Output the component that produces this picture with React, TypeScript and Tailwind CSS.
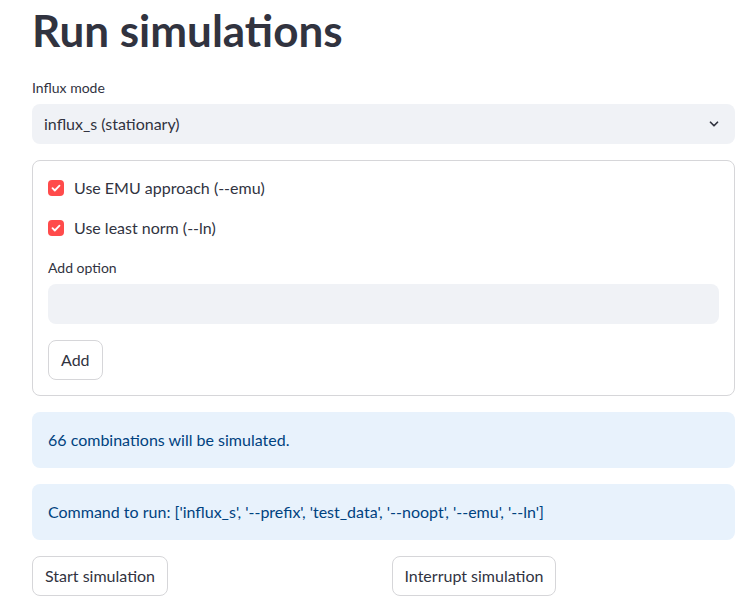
const font = { fontFamily: '"Source Sans Pro", Lato, "Noto Sans", sans-serif' };

const Checkbox = ({ label }: { label: string }) => (
  <label className="flex items-center h-6 gap-2.5">
    <span className="w-4 h-4 rounded-[4px] bg-[#ff4b4b] flex items-center justify-center">
      <svg width="12" height="12" viewBox="0 0 12 12" fill="none">
        <path d="M2.5 6.2l2.3 2.3 4.7-4.8" stroke="white" strokeWidth="1.8" strokeLinecap="round" strokeLinejoin="round" />
      </svg>
    </span>
    <span className="text-[16px] text-[#31333f]">{label}</span>
  </label>
);

const Button = ({ children }: { children: string }) => (
  <button className="h-10 px-3 rounded-lg border border-[#d6d6d9] bg-white text-[16px] text-[#31333f]">
    {children}
  </button>
);

export default function App() {
  return (
    <div className="min-h-screen bg-white pl-8 pr-[11px] pt-1 text-[#31333f]" style={font}>
      <h1 className="text-[44px] font-bold leading-[52px] text-[#31333f]">Run simulations</h1>

      <div className="mt-[20px]">
        <div className="text-[14px] h-6 leading-6">Influx mode</div>
        <div className="mt-1 h-10 rounded-lg bg-[#f0f2f6] flex items-center justify-between pl-3 pr-3.5">
          <span className="text-[16px]">influx_s (stationary)</span>
          <svg width="14" height="14" viewBox="0 0 24 24" fill="none">
            <path d="M6 9l6 6 6-6" stroke="#31333f" strokeWidth="3" strokeLinecap="round" strokeLinejoin="round" />
          </svg>
        </div>
      </div>

      <div className="mt-4 border border-[#d6d6d9] rounded-lg px-[15px] pt-[15px] pb-[15px] flex flex-col">
        <Checkbox label="Use EMU approach (--emu)" />
        <div className="mt-4">
          <Checkbox label="Use least norm (--ln)" />
        </div>
        <div className="mt-4 text-[14px] h-6 leading-6">Add option</div>
        <div className="mt-1 h-10 rounded-lg bg-[#f0f2f6]" />
        <div className="mt-4">
          <Button>Add</Button>
        </div>
      </div>

      <div className="mt-4 h-[56px] rounded-lg bg-[#e8f2fc] flex items-center px-4 text-[16px] text-[#004280]">
        66 combinations will be simulated.
      </div>
      <div className="mt-4 h-[56px] rounded-lg bg-[#e8f2fc] flex items-center px-4 text-[16px] text-[#004280]">
        Command to run: ['influx_s', '--prefix', 'test_data', '--noopt', '--emu', '--ln']
      </div>

      <div className="mt-4 grid grid-cols-2 gap-4">
        <div>
          <Button>Start simulation</Button>
        </div>
        <div>
          <Button>Interrupt simulation</Button>
        </div>
      </div>
    </div>
  );
}
